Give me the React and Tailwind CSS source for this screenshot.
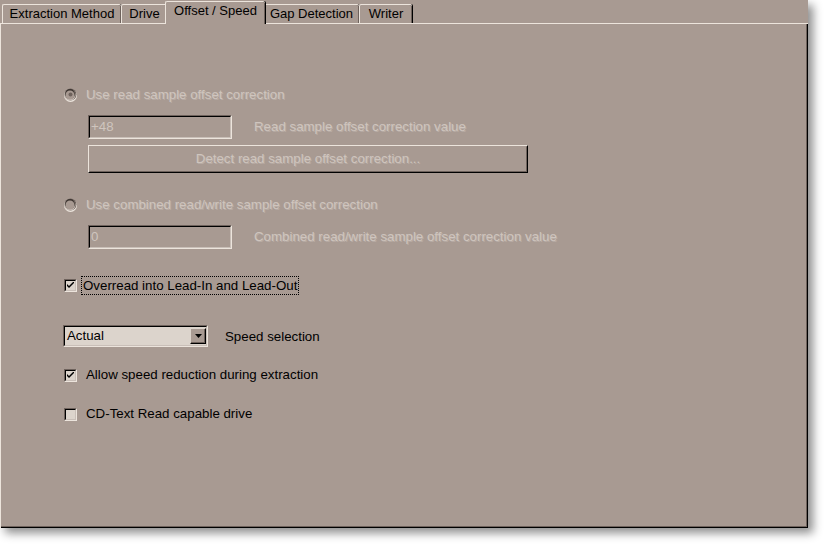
import React from "react";

const font = { fontFamily: '"Liberation Sans", Arial, sans-serif' };

function Tab({ label, width, selected }) {
  if (selected) {
    return (
      <div
        className="relative z-10 -mx-[2px] -mb-px flex h-[23px] items-start justify-center rounded-t-[2px] border-t border-l border-[#ece4dc] bg-[#a89a92] pt-[1px] text-[13px] leading-[16px] text-black shadow-[inset_-1px_0_0_#6e625c,1px_0_0_#000]"
        style={{ width: width + 4 }}
      >
        {label}
      </div>
    );
  }
  return (
    <div
      className="flex h-[19px] items-start justify-center rounded-t-[2px] border-t border-l border-[#ece4dc] pt-[1px] text-[13px] leading-[16px] text-black shadow-[inset_-1px_0_0_#6e625c,1px_0_0_#000]"
      style={{ width }}
    >
      {label}
    </div>
  );
}

function Radio({ checked }) {
  return (
    <div className="flex h-[13px] w-[13px] items-center justify-center rounded-full bg-[#ece4dc]">
      <div className="flex h-[12px] w-[12px] -translate-x-[0.5px] -translate-y-[0.5px] items-center justify-center rounded-full bg-[#6e625c]">
        <div className="flex h-[11px] w-[11px] items-center justify-center rounded-full bg-[#c9bfb8]">
          <div className="flex h-[10px] w-[10px] -translate-x-[0.5px] -translate-y-[0.5px] items-center justify-center rounded-full bg-[#3a322e]">
            <div className="flex h-[9px] w-[9px] translate-x-[0.5px] translate-y-[0.5px] items-center justify-center rounded-full bg-[#a89a92]">
              {checked && <div className="h-[4px] w-[4px] rounded-full bg-[#6e625c]" />}
            </div>
          </div>
        </div>
      </div>
    </div>
  );
}

function Checkbox({ checked }) {
  return (
    <div className="h-[13px] w-[13px] border border-t-[#6e625c] border-l-[#6e625c] border-r-[#ece4dc] border-b-[#ece4dc]">
      <div className="flex h-full w-full items-center justify-center border border-t-black border-l-black border-r-[#c9bfb8] border-b-[#c9bfb8] bg-[#dcd4cc]">
        {checked && (
          <svg width="7" height="7" viewBox="0 0 7 7">
            <path d="M0 2 L0 4 L2 6 L7 1 L7 -1 L2 4 Z" fill="#000" />
          </svg>
        )}
      </div>
    </div>
  );
}

function DisabledInput({ value }) {
  return (
    <div className="h-[24px] w-[144px] border border-t-[#6e625c] border-l-[#6e625c] border-r-[#ece4dc] border-b-[#ece4dc]">
      <div className="flex h-full w-full items-center border border-t-black border-l-black border-r-[#c9bfb8] border-b-[#c9bfb8] pl-[1px] text-[13.3px] text-[#cfc5be]">
        {value}
      </div>
    </div>
  );
}

export default function App() {
  const dis = "text-[13.3px] text-[#cfc5be] [text-shadow:1px_1px_0_#b8aca5]";
  return (
    <div className="h-[545px] w-[824px] bg-white" style={font}>
      <div className="flex h-[528px] w-[808px] flex-col bg-[#a89a92] shadow-[5px_5px_9px_rgba(0,0,0,0.45)]">
        <div className="flex h-[23px] items-end pl-[2px]">
          <Tab label="Extraction Method" width={119} />
          <Tab label="Drive" width={46} />
          <Tab label="Offset / Speed" width={96} selected />
          <Tab label="Gap Detection" width={96} />
          <Tab label="Writer" width={53} />
        </div>
        <div className="flex flex-1 flex-col border-t border-l border-t-[#ece4dc] border-l-[#ece4dc] pl-[63px] pt-[63px] shadow-[inset_-1px_-1px_0_#000,inset_-2px_-2px_0_#6e625c]">
          <div className="flex h-[16px] items-center">
            <Radio checked />
            <span className={`ml-[9px] ${dis}`}>Use read sample offset correction</span>
          </div>
          <div className="ml-[24px] mt-[12px] flex items-center">
            <DisabledInput value="+48" />
            <span className={`ml-[22px] ${dis}`}>Read sample offset correction value</span>
          </div>
          <div className="ml-[24px] mt-[6px] h-[28px] w-[440px] border border-t-[#ece4dc] border-l-[#ece4dc] border-r-black border-b-black">
            <div className={`flex h-full w-full items-center justify-center border border-transparent border-r-[#6e625c] border-b-[#6e625c] ${dis}`}>
              Detect read sample offset correction...
            </div>
          </div>
          <div className="mt-[24px] flex h-[16px] items-center">
            <Radio />
            <span className={`ml-[9px] ${dis}`}>Use combined read/write sample offset correction</span>
          </div>
          <div className="ml-[24px] mt-[12px] flex items-center">
            <DisabledInput value="0" />
            <span className={`ml-[22px] ${dis}`}>Combined read/write sample offset correction value</span>
          </div>
          <div className="mt-[26px] flex h-[20px] items-center">
            <Checkbox checked />
            <span className="ml-[4px] border border-dotted border-black px-[1px] text-[13.3px] leading-[17px] text-black">
              Overread into Lead-In and Lead-Out
            </span>
          </div>
          <div className="-ml-px mt-[30px] flex items-center">
            <div className="h-[22px] w-[145px] border border-t-[#6e625c] border-l-[#6e625c] border-r-[#ece4dc] border-b-[#ece4dc]">
              <div className="flex h-full w-full items-center border border-t-black border-l-black border-r-[#c9bfb8] border-b-[#c9bfb8] bg-[#dcd4cc]">
                <span className="flex-1 pl-[2px] text-[13.3px] text-black">Actual</span>
                <div className="flex h-[16px] w-[16px] items-center justify-center border border-t-[#dcd4cc] border-l-[#dcd4cc] border-r-black border-b-black bg-[#a89a92] shadow-[inset_-1px_-1px_0_#6e625c]">
                  <svg width="7" height="4" viewBox="0 0 7 4">
                    <path d="M0 0 H7 L3.5 4 Z" fill="#000" />
                  </svg>
                </div>
              </div>
            </div>
            <span className="ml-[17px] mt-[2px] text-[13.3px] text-black">Speed selection</span>
          </div>
          <div className="mt-[20px] flex h-[16px] items-center">
            <Checkbox checked />
            <span className="ml-[9px] text-[13.3px] text-black">Allow speed reduction during extraction</span>
          </div>
          <div className="mt-[23px] flex h-[16px] items-center">
            <Checkbox />
            <span className="ml-[9px] text-[13.3px] text-black">CD-Text Read capable drive</span>
          </div>
        </div>
      </div>
    </div>
  );
}
